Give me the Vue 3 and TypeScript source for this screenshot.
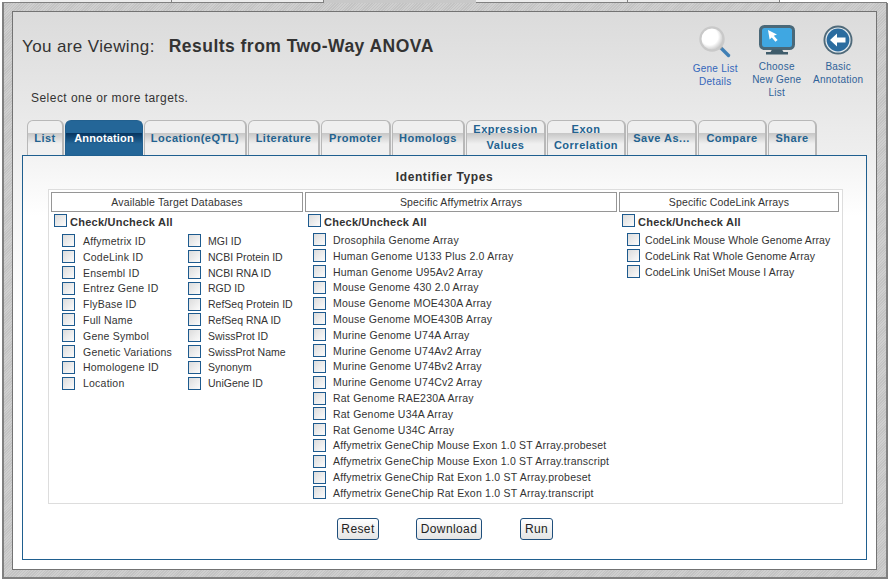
<script setup lang="ts">
interface Tab {
  label: string[];
  width: number;
  active?: boolean;
}

const tabs: Tab[] = [
  { label: ['List'], width: 37 },
  { label: ['Annotation'], width: 78, active: true },
  { label: ['Location(eQTL)'], width: 103 },
  { label: ['Literature'], width: 72 },
  { label: ['Promoter'], width: 70 },
  { label: ['Homologs'], width: 73 },
  { label: ['Expression', 'Values'], width: 80 },
  { label: ['Exon', 'Correlation'], width: 79 },
  { label: ['Save As...'], width: 70 },
  { label: ['Compare'], width: 69 },
  { label: ['Share'], width: 49 },
];

const databasesA = [
  'Affymetrix ID',
  'CodeLink ID',
  'Ensembl ID',
  'Entrez Gene ID',
  'FlyBase ID',
  'Full Name',
  'Gene Symbol',
  'Genetic Variations',
  'Homologene ID',
  'Location',
];

const databasesB = [
  'MGI ID',
  'NCBI Protein ID',
  'NCBI RNA ID',
  'RGD ID',
  'RefSeq Protein ID',
  'RefSeq RNA ID',
  'SwissProt ID',
  'SwissProt Name',
  'Synonym',
  'UniGene ID',
];

const affyArrays = [
  'Drosophila Genome Array',
  'Human Genome U133 Plus 2.0 Array',
  'Human Genome U95Av2 Array',
  'Mouse Genome 430 2.0 Array',
  'Mouse Genome MOE430A Array',
  'Mouse Genome MOE430B Array',
  'Murine Genome U74A Array',
  'Murine Genome U74Av2 Array',
  'Murine Genome U74Bv2 Array',
  'Murine Genome U74Cv2 Array',
  'Rat Genome RAE230A Array',
  'Rat Genome U34A Array',
  'Rat Genome U34C Array',
  'Affymetrix GeneChip Mouse Exon 1.0 ST Array.probeset',
  'Affymetrix GeneChip Mouse Exon 1.0 ST Array.transcript',
  'Affymetrix GeneChip Rat Exon 1.0 ST Array.probeset',
  'Affymetrix GeneChip Rat Exon 1.0 ST Array.transcript',
];

const codeLinkArrays = [
  'CodeLink Mouse Whole Genome Array',
  'CodeLink Rat Whole Genome Array',
  'CodeLink UniSet Mouse I Array',
];
</script>

<template>
  <div class="page">
    <div class="strip">
      <span class="strip-line first"></span>
      <span class="strip-tab"></span>
      <span class="strip-tab"></span>
      <span class="strip-current"></span>
      <span class="strip-tab"></span>
      <span class="strip-tab"></span>
      <span class="strip-line last"></span>
    </div>

    <div class="frame">
      <div class="panel">
        <header class="head">
          <div class="head-text">
            <h1 class="title"><span class="title-lead">You are Viewing:</span><b>Results from Two-Way ANOVA</b></h1>
            <p class="select">Select one or more targets.</p>
          </div>

          <nav class="links">
            <a class="link details">
              <svg width="32" height="32" viewBox="0 0 32 32">
                <defs>
                  <radialGradient id="lens" cx="0.4" cy="0.4" r="0.65">
                    <stop offset="0.55" stop-color="#ffffff" />
                    <stop offset="1" stop-color="#bdbdbd" />
                  </radialGradient>
                </defs>
                <path d="M21 21 L29.5 29.5" stroke="#3f7fb5" stroke-width="3.4" stroke-linecap="round" />
                <path d="M19.5 19.5 L22.5 22.5" stroke="#9a9a9a" stroke-width="3.4" />
                <circle cx="13" cy="13" r="11.6" fill="url(#lens)" stroke="#c9c9c9" stroke-width="2.2" />
              </svg>
              <span>Gene List</span>
              <span>Details</span>
            </a>
            <a class="link">
              <svg width="36" height="30" viewBox="0 0 36 30">
                <rect x="1.5" y="1.5" width="33" height="22" rx="4" fill="#3fa7e2" stroke="#4a6878" stroke-width="3" />
                <path d="M9 5 L18 9.5 L14.8 10.8 L18.6 15 L16.4 16.8 L12.8 12.4 L10.6 14.6 Z" fill="#ffffff" />
                <path d="M13 24.5 H23 L24.5 27 H29 V29.5 H7 V27 H11.5 Z" fill="#3f5c6b" />
              </svg>
              <span>Choose</span>
              <span>New Gene</span>
              <span>List</span>
            </a>
            <a class="link">
              <svg width="30" height="30" viewBox="0 0 30 30">
                <circle cx="15" cy="15" r="14.5" fill="#4f6a7a" />
                <circle cx="15" cy="15" r="12.6" fill="#e8eef2" />
                <circle cx="15" cy="15" r="11.4" fill="#2b6c9f" />
                <path d="M7 15 L14 8.6 V12.6 H22.5 V17.4 H14 V21.4 Z" fill="#ffffff" />
              </svg>
              <span>Basic</span>
              <span>Annotation</span>
            </a>
          </nav>
        </header>

        <div class="tabs">
          <div
            v-for="tab in tabs"
            :key="tab.label[0]"
            class="tab"
            :class="{ active: tab.active, double: tab.label.length > 1 }"
            :style="{ width: tab.width + 'px' }"
          >
            <span v-for="line in tab.label" :key="line">{{ line }}</span>
          </div>
        </div>

        <section class="content">
          <h2 class="heading">Identifier Types</h2>

          <div class="table">
            <div class="col col-db">
              <div class="col-head">Available Target Databases</div>
              <label class="all"><i class="box"></i>Check/Uncheck All</label>
              <div class="db-lists">
                <ul class="list">
                  <li v-for="name in databasesA" :key="name"><i class="box"></i>{{ name }}</li>
                </ul>
                <ul class="list second">
                  <li v-for="name in databasesB" :key="name"><i class="box"></i>{{ name }}</li>
                </ul>
              </div>
            </div>

            <div class="col col-affy">
              <div class="col-head">Specific Affymetrix Arrays</div>
              <label class="all"><i class="box"></i>Check/Uncheck All</label>
              <ul class="list arrays">
                <li v-for="name in affyArrays" :key="name"><i class="box"></i>{{ name }}</li>
              </ul>
            </div>

            <div class="col col-code">
              <div class="col-head">Specific CodeLink Arrays</div>
              <label class="all"><i class="box"></i>Check/Uncheck All</label>
              <ul class="list arrays">
                <li v-for="name in codeLinkArrays" :key="name"><i class="box"></i>{{ name }}</li>
              </ul>
            </div>
          </div>

          <div class="actions">
            <button class="btn reset">Reset</button>
            <button class="btn download">Download</button>
            <button class="btn run">Run</button>
          </div>
        </section>
      </div>
    </div>
  </div>
</template>

<style>
html,
body {
  margin: 0;
  background: #ffffff;
}
</style>

<style scoped>
.page {
  width: 890px;
  height: 585px;
  overflow: hidden;
  font-family: "Liberation Sans", Arial, sans-serif;
  color: #333333;
}

.strip {
  display: flex;
  height: 3px;
  margin-left: 2px;
  width: 886px;
}

.strip-line {
  display: block;
  height: 1px;
  margin-top: 2px;
  background: #808080;
}

.strip-line.first {
  width: 18px;
}

.strip-line.last {
  width: 107px;
}

.strip-tab {
  display: block;
  width: 151px;
  height: 2px;
  background: #ececec;
  border-right: 1px solid #808080;
  border-bottom: 1px solid #808080;
}

.strip-current {
  display: block;
  width: 152px;
  background: #c8c8c8;
}

.frame {
  box-sizing: border-box;
  width: 886px;
  height: 576px;
  margin-left: 2px;
  padding: 8px 9px 9px 8px;
  border: 2px solid #808080;
  border-top: 0;
  background: repeating-linear-gradient(135deg, #c3c3c3 0 1px, #cfcfcf 1px 2px);
}

.panel {
  box-sizing: border-box;
  height: 559px;
  padding: 0 9px;
  border: 1px solid #737373;
  background: linear-gradient(#dbdbdb 0, #e6e6e6 80px, #f2f2f2 170px, #ffffff 300px);
}

.head {
  display: flex;
  justify-content: space-between;
  height: 108px;
}

.title {
  margin: 24px 0 0;
  font-size: 17px;
  line-height: 20px;
  font-weight: 400;
  letter-spacing: 0.38px;
  color: #333333;
}

.title b {
  font-size: 17.5px;
  letter-spacing: 0.47px;
}

.title-lead {
  margin-right: 14px;
}

.select {
  margin: 34px 0 0 9px;
  font-size: 12px;
  line-height: 14px;
  letter-spacing: 0.47px;
}

.links {
  display: flex;
  margin-right: -2px;
  padding-top: 13px;
}

.link {
  display: flex;
  flex-direction: column;
  align-items: center;
  width: 61.5px;
  font-size: 10px;
  line-height: 13px;
  letter-spacing: 0.25px;
  color: #2f6299;
}

.link svg {
  display: block;
  margin-bottom: 5px;
}

.link.details {
  color: #3366bb;
  padding-top: 1px;
}

.link.details svg {
  margin-bottom: 4px;
}

.tabs {
  display: flex;
  gap: 1px;
  height: 35px;
  margin-left: 5px;
}

.tab {
  box-sizing: border-box;
  display: flex;
  flex-direction: column;
  align-items: center;
  justify-content: center;
  flex: none;
  height: 35px;
  padding-bottom: 1px;
  border: 1px solid #b8b8b8;
  border-bottom: 0;
  border-width: 1px 2px 0 1px;
  border-radius: 6px 6px 0 0;
  background: linear-gradient(#efefef 0, #efefef 12px, #c6c6c6 12px, #f0f0f0 23px, #f0f0f0 100%);
  font-size: 11px;
  line-height: 16px;
  font-weight: 700;
  letter-spacing: 0.5px;
  color: #22628f;
}

.tab.double {
  padding-bottom: 3px;
  width: 81px;
}

.tab.active {
  border: 1px solid #22608f;
  border-bottom: 0;
  background: linear-gradient(#246698 0, #246698 12px, #07355f 12px, #246698 23px, #246698 100%);
  color: #ffffff;
  letter-spacing: 0.15px;
}

.content {
  box-sizing: border-box;
  height: 405px;
  margin-bottom: 0;
  padding-top: 14px;
  border: 1px solid #1f5f8f;
  background: linear-gradient(#f3f3f3 0, #ffffff 60px);
}

.heading {
  margin: 0;
  height: 19px;
  font-size: 12px;
  line-height: 15px;
  font-weight: 700;
  letter-spacing: 0.6px;
  text-align: center;
  color: #333333;
}

.table {
  box-sizing: border-box;
  display: flex;
  gap: 2px;
  width: 795px;
  height: 315px;
  margin-left: 25px;
  padding: 2px;
  border: 1px solid #dddddd;
  background: #ffffff;
}

.col-db {
  width: 252px;
}

.col-affy {
  width: 312px;
}

.col-code {
  width: 220px;
}

.col {
  flex: none;
}

.col-head {
  box-sizing: border-box;
  height: 20px;
  border: 1px solid #969696;
  font-size: 10.5px;
  line-height: 18px;
  letter-spacing: 0.15px;
  text-align: center;
  color: #333333;
}

.all {
  display: flex;
  align-items: center;
  height: 16px;
  margin: 2px 0 0 3px;
  font-size: 11px;
  font-weight: 700;
  letter-spacing: 0.25px;
  white-space: nowrap;
}

.all .box {
  margin: -3px 3px 0 0;
}

.box {
  box-sizing: border-box;
  display: block;
  flex: none;
  width: 13px;
  height: 13px;
  border: 1px solid #1d5a8e;
  background: linear-gradient(135deg, #dcdcdc, #fbfbfb);
}

.db-lists {
  display: flex;
  margin-top: 3px;
}

.list {
  width: 126px;
  margin: 0;
  padding: 0 0 0 11px;
  list-style: none;
  box-sizing: border-box;
}

.list.second {
  padding-left: 11px;
  width: 120px;
}

.list li {
  display: flex;
  align-items: center;
  height: 15.82px;
  font-size: 10.5px;
  letter-spacing: 0.22px;
  white-space: nowrap;
  color: #333333;
}

.list li .box {
  margin-right: 8px;
}

.list.second li {
  letter-spacing: 0;
}

.list.second li .box {
  margin-right: 7px;
}

.list.arrays {
  width: auto;
  margin-top: 2px;
  padding-left: 8px;
}

.col-affy .list.arrays li .box {
  margin-right: 7px;
}

.col-code .list.arrays li {
  letter-spacing: 0.1px;
}

.col-code .list.arrays li .box {
  margin-right: 5px;
}

.actions {
  display: flex;
  margin: 14px 0 0 314px;
}

.btn {
  box-sizing: border-box;
  height: 22px;
  padding: 0;
  border: 1px solid #1f4f7c;
  border-radius: 3px;
  background: linear-gradient(#ffffff, #e4e4e4);
  font-family: "Liberation Sans", Arial, sans-serif;
  font-size: 12px;
  letter-spacing: 0.4px;
  color: #222222;
}

.reset {
  width: 42px;
}

.download {
  width: 66px;
  margin-left: 37px;
}

.run {
  width: 33px;
  margin-left: 38px;
}
</style>
